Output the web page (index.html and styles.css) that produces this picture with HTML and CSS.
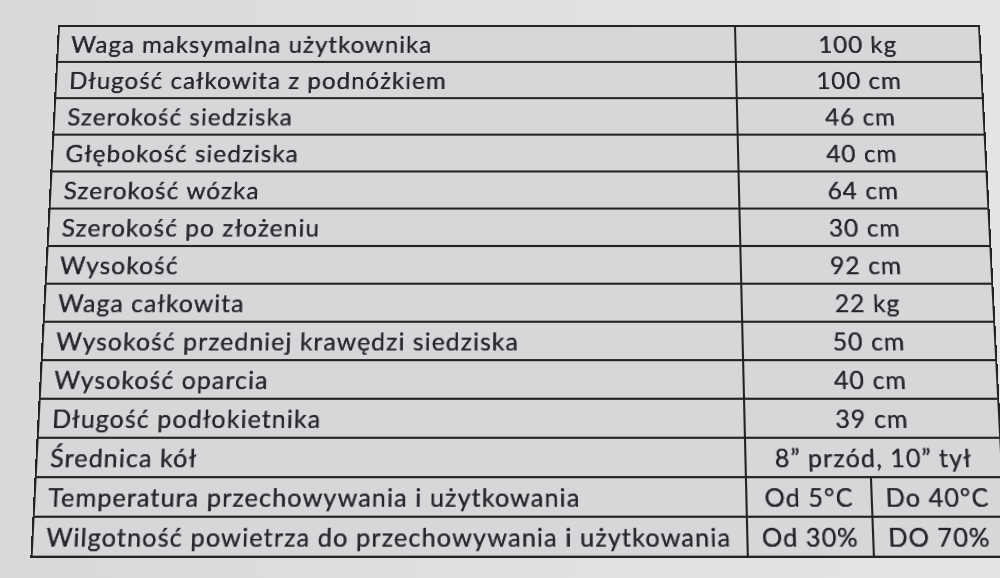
FILE: index.html
```html
<!DOCTYPE html>
<html lang="pl">
<head>
<meta charset="utf-8">
<title>Specyfikacja wózka</title>
<link rel="stylesheet" href="styles.css">
</head>
<body>
<div class="sheet">
  <div class="spec">
    <div class="cell label">Waga maksymalna użytkownika</div><div class="cell value">100 kg</div>
    <div class="cell label">Długość całkowita z podnóżkiem</div><div class="cell value">100 cm</div>
    <div class="cell label">Szerokość siedziska</div><div class="cell value">46 cm</div>
    <div class="cell label">Głębokość siedziska</div><div class="cell value">40 cm</div>
    <div class="cell label">Szerokość wózka</div><div class="cell value">64 cm</div>
    <div class="cell label">Szerokość po złożeniu</div><div class="cell value">30 cm</div>
    <div class="cell label">Wysokość</div><div class="cell value">92 cm</div>
    <div class="cell label">Waga całkowita</div><div class="cell value">22 kg</div>
    <div class="cell label">Wysokość przedniej krawędzi siedziska</div><div class="cell value">50 cm</div>
    <div class="cell label">Wysokość oparcia</div><div class="cell value">40 cm</div>
    <div class="cell label">Długość podłokietnika</div><div class="cell value">39 cm</div>
    <div class="cell label">Średnica kół</div><div class="cell value">8” przód, 10” tył</div>
    <div class="cell label">Temperatura przechowywania i użytkowania</div><div class="cell half">Od 5°C</div><div class="cell half">Do 40°C</div>
    <div class="cell label">Wilgotność powietrza do przechowywania i użytkowania</div><div class="cell half">Od 30%</div><div class="cell half">DO 70%</div>
  </div>
</div>
</body>
</html>
```

FILE: styles.css
```css
html, body {
  margin: 0;
  padding: 0;
}
body {
  width: 1000px;
  height: 578px;
  overflow: hidden;
  background: linear-gradient(90deg, #d9d8db 0%, #e1e0e3 60%, #e4e3e6 100%);
  font-family: Lato, "Open Sans", sans-serif;
  color: #26262a;
}
.sheet {
  padding: 25px 0 0 58px;
}
.spec {
  width: 922px;
  box-sizing: border-box;
  display: grid;
  grid-template-columns: 674px 117px 123px;
  grid-template-rows: repeat(14, 34px);
  gap: 2px;
  padding: 2px;
  background: #232325;
  transform-origin: 462px 0;
  transform: perspective(1000px) rotateX(6.4deg);
}
.cell {
  background: #d7d6d9;
  display: flex;
  align-items: center;
  font-size: 24px;
  line-height: 1;
  letter-spacing: 1px;
  text-shadow: 0 0 0.6px #26262a;
  white-space: nowrap;
}
.label {
  padding-left: 12px;
}
.value {
  grid-column: span 2;
  justify-content: center;
}
.half {
  justify-content: center;
}
```
